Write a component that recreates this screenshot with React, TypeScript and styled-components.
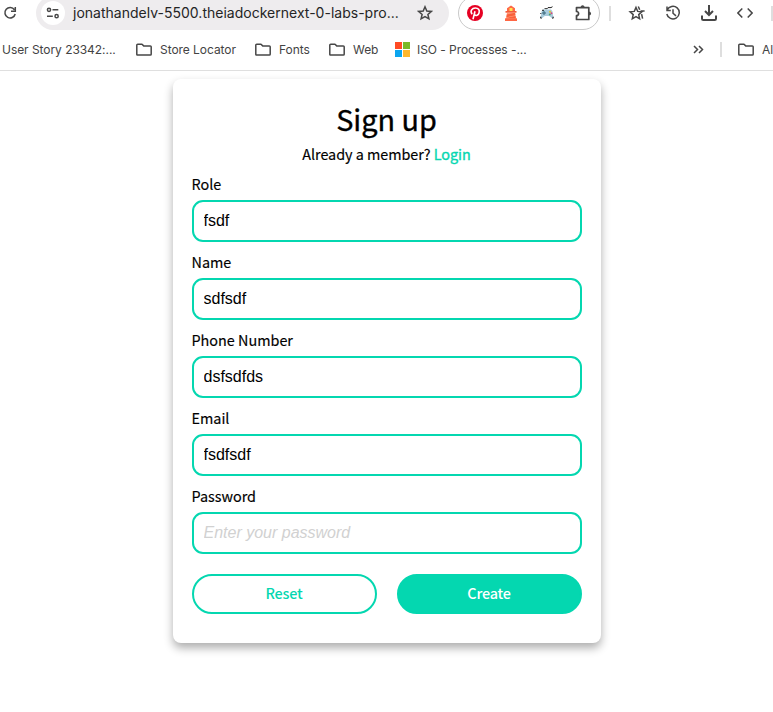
import React from "react";
import styled, { createGlobalStyle } from "styled-components";

const GlobalStyle = createGlobalStyle`
  * { box-sizing: border-box; }
  html, body { margin: 0; background: #fff; overflow: hidden; }
`;

const accent = "#04d7b0";
const sourceSans = `"Source Sans Pro", "Noto Sans CJK SC", sans-serif`;

const Window = styled.div`
  height: 712px;
  overflow: hidden;
  display: flow-root;
`;

const Browser = styled.header`
  height: 75px;
  margin-top: -4px;
  border-bottom: 1px solid #dfdfdf;
  font-family: Inter, sans-serif;
  color: #434343;
`;

const Toolbar = styled.div`
  display: flex;
  align-items: center;
  height: 34px;
`;

const Cell = styled.span<{ $w?: number }>`
  display: flex;
  align-items: center;
  justify-content: center;
  flex: none;
  width: ${(p) => p.$w ?? 36}px;
  svg { display: block; }
`;

const Address = styled.div`
  display: flex;
  align-items: center;
  width: 413px;
  height: 34px;
  margin-left: 16px;
  padding-left: 5px;
  border-radius: 17px;
  background: #eeecee;
  flex: none;
`;

const SiteButton = styled.span`
  display: flex;
  align-items: center;
  justify-content: center;
  width: 24px;
  height: 24px;
  border-radius: 50%;
  background: #fff;
`;

const Url = styled.span`
  width: 330px;
  margin: 0 12px 0 8px;
  font-size: 14px;
  line-height: 20px;
  letter-spacing: 0.01px;
  white-space: nowrap;
  color: #252525;
`;

const Extensions = styled.div`
  display: flex;
  align-items: center;
  width: 142px;
  height: 34px;
  margin-left: 9px;
  border: 1px solid #c9c9c9;
  border-radius: 17px;
  flex: none;
  & > :first-child { margin-left: -2px; }
`;

const Divider = styled.span<{ $left: number; $right: number }>`
  width: 2px;
  height: 15px;
  background: #dedede;
  flex: none;
  margin: 0 ${(p) => p.$right}px 0 ${(p) => p.$left}px;
`;

const Bookmarks = styled.nav`
  display: flex;
  align-items: center;
  height: 39px;
  padding-left: 2px;
  font-size: 12px;
  white-space: nowrap;
`;

const Bookmark = styled.span<{ $w: number; $gap?: number }>`
  display: flex;
  align-items: center;
  flex: none;
  gap: ${(p) => p.$gap ?? 8}px;
  width: ${(p) => p.$w}px;
  letter-spacing: -0.05px;
  svg { flex: none; }
`;

const Main = styled.main`
  display: flex;
  justify-content: center;
  padding-top: 8px;
  font-family: ${sourceSans};
`;

const Card = styled.form`
  width: 428px;
  height: 564px;
  padding: 20px 19px 0;
  border-radius: 8px;
  background: #fff;
  box-shadow: 0 5px 10px rgba(0, 0, 0, 0.32);
`;

const Title = styled.h1`
  margin: 0;
  height: 41px;
  line-height: 40px;
  font-size: 28.8px;
  font-weight: 400;
  -webkit-text-stroke: 0.35px #000;
  text-align: center;
  color: #000;
`;

const Member = styled.p`
  margin: 0 0 10px;
  height: 28px;
  line-height: 28px;
  font-size: 14.4px;
  letter-spacing: -0.04px;
  text-align: center;
  -webkit-text-stroke: 0.15px currentColor;
`;

const Login = styled.a`
  color: ${accent};
  -webkit-text-stroke: 0.35px currentColor;
`;

const Field = styled.label`
  display: block;
  height: 78px;
`;

const Caption = styled.span`
  display: block;
  height: 22px;
  line-height: 12px;
  font-size: 14.4px;
  -webkit-text-stroke: 0.15px #000;
`;

const Input = styled.input`
  display: block;
  width: 390px;
  height: 42px;
  padding: 0 10px;
  border: 2px solid ${accent};
  border-radius: 11px;
  background: #fff;
  outline: 0;
  font: 16px "Liberation Sans", Arial, sans-serif;
  color: #000;
  &::placeholder { color: #d1d1d1; font-style: italic; opacity: 1; }
`;

const Actions = styled.div`
  display: flex;
  gap: 20px;
  margin-top: 6px;
`;

const Button = styled.button<{ $filled?: boolean }>`
  width: 185px;
  height: 40px;
  padding: 0 0 3px;
  border: 2px solid ${accent};
  border-radius: 20px;
  background: ${(p) => (p.$filled ? accent : "#fff")};
  color: ${(p) => (p.$filled ? "#fff" : accent)};
  font: 500 14.4px ${sourceSans};
  letter-spacing: -0.2px;
`;

const Line = styled.svg`
  fill: none;
  stroke: #474747;
  stroke-width: 1.5;
`;

const Folder = () => (
  <Line width="16" height="14" viewBox="0 0 16 14" strokeLinejoin="round">
    <path d="M.8 2.1Q.8 1.2 1.7 1.2H6l1.7 1.7h6.6q.9 0 .9.9v7.4q0 .9-.9.9H1.7q-.9 0-.9-.9z" />
  </Line>
);

const starPath = "M8 1.8 9.8 6l4.5.4-3.4 3 1 4.4L8 11.5l-3.9 2.3 1-4.4-3.4-3L6.2 6z";

const fields = [
  { label: "Role", value: "fsdf" },
  { label: "Name", value: "sdfsdf" },
  { label: "Phone Number", value: "dsfsdfds" },
  { label: "Email", value: "fsdfsdf" },
  { label: "Password", value: "" },
];

export default function App() {
  return (
    <Window>
      <GlobalStyle />
      <Browser>
        <Toolbar>
          <Cell $w={20}>
            <Line width="14" height="14" viewBox="0 0 14 14">
              <path d="M11.4 3.8A5.2 5.2 0 1 0 12.2 8M12.3 1v4.3H8" />
            </Line>
          </Cell>
          <Address>
            <SiteButton>
              <Line width="14" height="12" viewBox="0 0 14 12">
                <circle cx="3" cy="2.8" r="1.6" /><path d="M6.5 2.8h5.8M1 9.2h5.8" /><circle cx="10.6" cy="9.2" r="1.6" />
              </Line>
            </SiteButton>
            <Url>jonathandelv-5500.theiadockernext-0-labs-pro...</Url>
            <Cell $w={20}>
              <Line width="16" height="16" viewBox="0 0 16 16"><path d={starPath} /></Line>
            </Cell>
          </Address>
          <Extensions>
            <Cell>
              <svg width="16" height="16" viewBox="0 0 16 16">
                <circle cx="8" cy="8" r="8" fill="#e60023" />
                <path d="M6 14.2 8 6.2M5.1 9.2C2.6 6 5.2 3 8.3 3c3.1 0 4.5 2 3.8 4.8-.6 2.5-3.2 3.5-4.6 1.7" fill="none" stroke="#fff" strokeWidth="1.6" />
              </svg>
            </Cell>
            <Cell>
              <svg width="14" height="16" viewBox="0 0 14 16">
                <path d="M3 3.3 7 .5l4 2.8v4H3z" fill="#ff6846" />
                <path d="M5.5 3h3v3.2h-3z" fill="#ffe34f" />
                <path d="M1.5 6h11v1.7h-11z" fill="#f25b3a" />
                <path d="M3 7.7h8l.9 5.8H2.1z" fill="#ff9676" />
                <path d="m2.8 9.5 8.3-1.7.3 2.4-9 2zM2.2 13l9.4-2 .3 2.5H2z" fill="#f9613b" />
                <path d="M1 13.3h12V16H1z" fill="#ff6744" />
              </svg>
            </Cell>
            <Cell>
              <svg width="14" height="14" viewBox="0 0 14 14">
                <path d="M4.5 2.7h2.7L8 1.6h3L12.5.7" fill="none" stroke="#222" />
                <path d="M3 3.6h8l1.4 1.6 1 6.2q-1 1.4-2.6-.2L9.2 10H4.8l-1.6 1.2Q1.5 12.8.6 11.4l1-6.2z" fill="#a8cbdc" />
                <path d="M4 5v4M2 7h4" stroke="#38677b" /><path d="M2 4.3h2M.8 7v1" stroke="#222" /><circle cx="10" cy="5.8" r="1" fill="#e5c52f" /><circle cx="11.5" cy="7.2" r="1" fill="#d9487a" /><circle cx="9.8" cy="8.5" r="1" fill="#4aa36a" /><path d="M.7 10.7v1.5h1M13.2 10.7v1.5h-1" stroke="#222" fill="none" />
              </svg>
            </Cell>
            <Cell>
              <svg width="18" height="18" viewBox="0 0 18 18">
                <path d="M2.5 3.6h12.3v11.9H2.5v-3.8a2.1 2.1 0 0 0 0-4.2z" fill="none" stroke="#474747" strokeWidth="1.7" strokeLinejoin="round" />
                <path d="M6.8 3.5V2.3q1.8-2.2 3.6 0v1.2zM15 7.7h1.1q2 1.8 0 3.6H15z" fill="#474747" />
              </svg>
            </Cell>
          </Extensions>
          <Divider $left={9} $right={8} />
          <Cell>
            <Line width="18" height="17" viewBox="0 0 18 17">
              <path d="M8 2.5 9.7 6.4l4.1.4-3.1 2.8.9 4.2L8 11.7l-3.7 2.1.9-4.2-3.1-2.8 4.2-.4zM10.3 1.5l1.4 3.2M12.6 6h4M13.6 9.2l1 4.5" />
            </Line>
          </Cell>
          <Cell>
            <Line width="16" height="16" viewBox="0 0 16 16">
              <path d="M2.2 5A6.3 6.3 0 1 1 1.8 9M2 1.6v3.8h3.8M8 4.2v4l3 2.7" />
            </Line>
          </Cell>
          <Cell>
            <svg width="18" height="18" viewBox="0 0 18 18" fill="none" stroke="#474747" strokeWidth="2">
              <path d="M9 1v9.5M5 7l4 4 4-4M2 11.5v3.2q0 1.3 1.3 1.3h11.4q1.3 0 1.3-1.3v-3.2" />
            </svg>
          </Cell>
          <Cell>
            <Line width="16" height="12" viewBox="0 0 16 12"><path d="M5.3 1.5.9 6l4.4 4.5M10.7 1.5 15.1 6l-4.4 4.5" /></Line>
          </Cell>
          <Divider $left={8} $right={0} />
        </Toolbar>
        <Bookmarks>
          <Bookmark $w={134}>User Story 23342:...</Bookmark>
          <Bookmark $w={119}><Folder />Store Locator</Bookmark>
          <Bookmark $w={74}><Folder />Fonts</Bookmark>
          <Bookmark $w={66}><Folder />Web</Bookmark>
          <Bookmark $w={297} $gap={7}>
            <svg width="15" height="15" viewBox="0 0 15 15">
              <path fill="#ff4b25" d="M0 0h7v7H0z" /><path fill="#78ba29" d="M8 0h7v7H8z" /><path fill="#0ca5ef" d="M0 8h7v7H0z" /><path fill="#ffb82d" d="M8 8h7v7H8z" />
            </svg>
            ISO - Processes -...
          </Bookmark>
          <Cell $w={12}>
            <Line width="11" height="9" viewBox="0 0 11 9"><path d="m1 1 3.5 3.5L1 8M6 1l3.5 3.5L6 8" /></Line>
          </Cell>
          <Divider $left={16} $right={16} />
          <Bookmark $w={36}><Folder />Al</Bookmark>
        </Bookmarks>
      </Browser>
      <Main>
        <Card>
          <Title>Sign up</Title>
          <Member>Already a member? <Login>Login</Login></Member>
          {fields.map((f) => (
            <Field key={f.label}>
              <Caption>{f.label}</Caption>
              <Input defaultValue={f.value} placeholder={f.value ? "" : "Enter your password"} />
            </Field>
          ))}
          <Actions>
            <Button type="button">Reset</Button>
            <Button type="button" $filled>Create</Button>
          </Actions>
        </Card>
      </Main>
    </Window>
  );
}
